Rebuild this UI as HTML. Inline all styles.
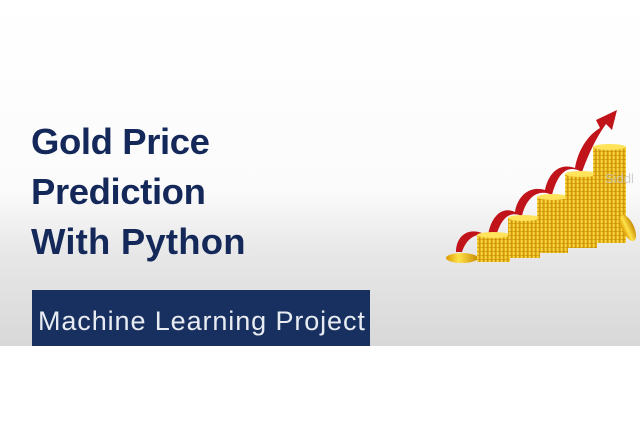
<!DOCTYPE html>
<html><head><style>
body{margin:0;width:640px;height:426px;overflow:hidden;background:#fff;font-family:"Liberation Sans",sans-serif}
.top{position:absolute;left:0;top:0;width:640px;height:346px;background:linear-gradient(#fff 0,#fbfbfb 190px,#e8e8e8 250px,#d8d8d8 346px)}
.t{position:absolute;left:31px;font-weight:bold;font-size:36.5px;color:#14295a;letter-spacing:-0.4px}
.box{position:absolute;left:32px;top:290px;width:338px;height:56px;background:#17305f}
.box span{position:absolute;left:6px;top:16px;color:#e8ecf2;font-size:27px;white-space:nowrap;letter-spacing:0.9px}
</style></head><body>
<div class="top"></div>
<div class="t" style="top:121px">Gold Price</div>
<div class="t" style="top:171px">Prediction</div>
<div class="t" style="top:221px;letter-spacing:0.2px">With Python</div>
<div class="box"><span>Machine Learning Project</span></div>
<svg width="640" height="346" style="position:absolute;left:0;top:0">
<defs><linearGradient id="g" x1="0" x2="1"><stop offset="0" stop-color="#d99a00"/><stop offset=".4" stop-color="#ffe24a"/><stop offset="1" stop-color="#c98a00"/></linearGradient>
<pattern id="p" width="4" height="4" patternUnits="userSpaceOnUse"><rect width="4" height="4" fill="url(#g)"/><rect y="3" width="4" height="1" fill="#c08400" opacity=".5"/></pattern></defs>
<path d="M456 252 C456 235 470 225 488 236 C490 220 500 205 515 212 C517 198 528 185 545 190 C548 175 558 162 575 168 C578 150 588 135 600 128 L596 120 L617 110 L612 130 L606 124 C598 135 590 150 582 172 C568 164 558 172 552 195 C538 188 526 198 522 216 C508 210 500 220 495 240 C482 230 468 234 462 252 Z" fill="#c0141a"/>
<ellipse cx="462" cy="258" rx="16" ry="5" fill="url(#g)"/>
<rect x="477" y="235" width="33" height="27" fill="url(#p)"/><ellipse cx="493.5" cy="235" rx="16.5" ry="3" fill="#ffe35a"/>
<rect x="508" y="218" width="32" height="40" fill="url(#p)"/><ellipse cx="524" cy="218" rx="16" ry="3" fill="#ffe35a"/>
<rect x="537" y="197" width="31" height="56" fill="url(#p)"/><ellipse cx="552.5" cy="197" rx="15.5" ry="3" fill="#ffe35a"/>
<rect x="565" y="174" width="32" height="74" fill="url(#p)"/><ellipse cx="581" cy="174" rx="16" ry="3" fill="#ffe35a"/>
<rect x="593" y="147" width="33" height="96" fill="url(#p)"/><ellipse cx="609.5" cy="147" rx="16.5" ry="3" fill="#ffe35a"/>
<ellipse cx="628" cy="228" rx="6" ry="14" transform="rotate(-25 628 228)" fill="url(#g)"/>
</svg>
<div style="position:absolute;left:605px;top:171px;color:#c4c4c4;font-size:13px;opacity:.8">Siddl</div>
</body></html>
